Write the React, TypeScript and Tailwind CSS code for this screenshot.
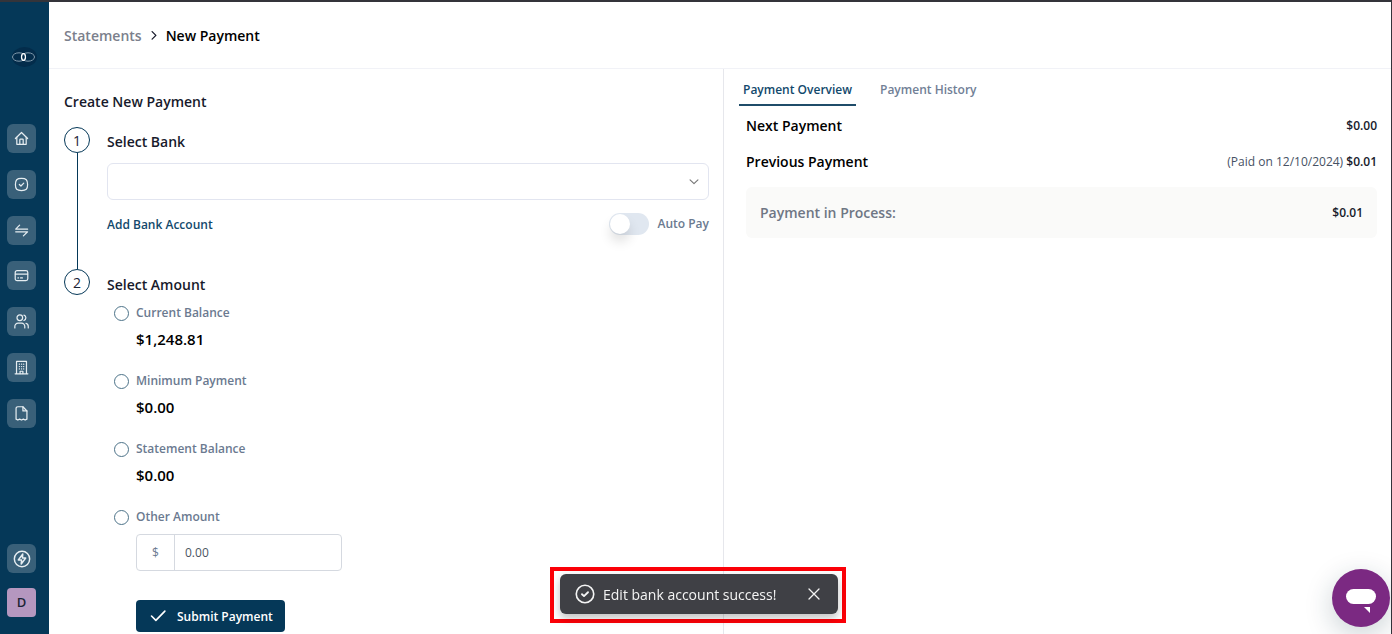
import React, { useState } from 'react';
import clsx from 'clsx';

type IconProps = { children: React.ReactNode; className?: string };

const Icon = ({ children, className = 'size-4' }: IconProps) => (
  <svg
    className={className}
    viewBox="0 0 16 16"
    fill="none"
    stroke="currentColor"
    strokeWidth="1.3"
    strokeLinecap="round"
    strokeLinejoin="round"
    aria-hidden="true"
  >
    {children}
  </svg>
);

const NAV_ITEMS = [
  {
    label: 'Home',
    icon: (
      <>
        <path d="M1.5 8 8 1.6 14.5 8" />
        <path d="M3 6.8v7.4h10V6.8M6.2 14V9.4a.8.8 0 0 1 .8-.8h2a.8.8 0 0 1 .8.8V14" />
      </>
    ),
  },
  {
    label: 'Tasks',
    icon: (
      <>
        <path d="M8 1.5c5 0 6.5 1.5 6.5 6.5S13 14.5 8 14.5 1.5 13 1.5 8 3 1.5 8 1.5z" />
        <path d="m5.7 8 1.7 1.6 3-3.1" />
      </>
    ),
  },
  { label: 'Transfers', icon: <path d="M6 2.3 1.8 6.6h12.7M1.8 9.4h12.7L10 13.7" /> },
  {
    label: 'Cards',
    icon: (
      <>
        <rect x="1.3" y="2.7" width="13.4" height="10.8" rx="2" />
        <path d="M1.5 6.6h13M4.2 10.6h.6M7 10.6h2" />
      </>
    ),
  },
  {
    label: 'Users',
    icon: (
      <>
        <circle cx="6.2" cy="4" r="3" />
        <path d="M10.6 1.2a3 3 0 0 1 0 5.7M.9 14.9v-1.7a3.4 3.4 0 0 1 3.4-3.4h3.8a3.4 3.4 0 0 1 3.4 3.4v1.7M12.7 9.9a3.4 3.4 0 0 1 2.5 3.3v1.7" />
      </>
    ),
  },
  {
    label: 'Company',
    icon: (
      <>
        <path d="M1.2 14.7h13.6M2.7 14.5V1.5h10.6v13" />
        <path d="M5.7 4.5h.2M8 4.5h.2M10.2 4.5h.2M5.7 7h.2M8 7h.2M10.2 7h.2M5.7 9.5h.2M8 9.5h.2M10.2 9.5h.2M6.5 14.5V12h3v2.5" />
      </>
    ),
  },
  {
    label: 'Statements',
    icon: (
      <>
        <path d="M2.2 14V2.6A1.8 1.8 0 0 1 4 .8h5.5l4.3 4.5V14l-1.900 1-1.900-1-2 1-2-1-1.900 1z" />
        <path d="M9.5 1v4.300h4.200" />
      </>
    ),
  },
];

const AMOUNT_OPTIONS = [
  { id: 'current', label: 'Current Balance', amount: '$1,248.81' },
  { id: 'minimum', label: 'Minimum Payment', amount: '$0.00' },
  { id: 'statement', label: 'Statement Balance', amount: '$0.00' },
  { id: 'other', label: 'Other Amount' },
];

function Sidebar() {
  const tile = 'flex size-[29px] items-center justify-center rounded-md bg-[#396079] text-[#e6edf1]';

  return (
    <aside className="flex w-[49px] shrink-0 flex-col bg-[#053858] pb-[17px] pl-[7px]">
      <a href="#home" aria-label="Dashboard" className="mt-11 ml-1 block">
        <svg className="h-[22px] w-[26px]" viewBox="0 0 26 22" fill="none" aria-hidden="true">
          <ellipse cx="13.5" cy="11" rx="12.5" ry="10" fill="#032c4b" />
          <ellipse cx="8" cy="11" rx="6.5" ry="4.2" stroke="#8fa6b7" strokeWidth="0.9" />
          <ellipse cx="17" cy="11" rx="6.5" ry="4.2" stroke="#8fa6b7" strokeWidth="0.9" />
          <ellipse cx="12.5" cy="11" rx="2" ry="3.5" stroke="#fff" strokeWidth="1.2" />
        </svg>
      </a>
      <nav className="mt-14 flex h-[304px] flex-col justify-between">
        {NAV_ITEMS.map((item) => (
          <a key={item.label} href={`#${item.label.toLowerCase()}`} aria-label={item.label} className={tile}>
            <Icon className="size-[15px]">{item.icon}</Icon>
          </a>
        ))}
      </nav>
      <div className="mt-auto flex flex-col gap-[15px]">
        <button type="button" aria-label="Quick actions" className={tile}>
          <Icon className="size-[18px]">
            <circle cx="8" cy="8" r="6.8" />
            <path d="M8.7 3.6 4.7 8.9h2.9l-.3 3.5 4-5.3H8.4z" />
          </Icon>
        </button>
        <button
          type="button"
          className="flex size-[29px] items-center justify-center rounded-sm bg-[#b597bf] text-[13px] font-semibold text-[#1c2536]"
        >
          D
        </button>
      </div>
    </aside>
  );
}

function StepMarker({ step, last }: { step: number; last?: boolean }) {
  return (
    <div className="flex w-[26px] shrink-0 flex-col items-center">
      <span className="flex size-[26px] items-center justify-center rounded-full border border-[#053858] pt-px text-sm text-[#1c2536]">
        {step}
      </span>
      {!last && <span className="w-px flex-1 bg-[#053858]" />}
    </div>
  );
}

function PaymentForm() {
  const [option, setOption] = useState('');
  const [amount, setAmount] = useState('0.00');
  const [autoPay, setAutoPay] = useState(false);

  return (
    <form className="pt-[23px] pr-[14px] pl-[15px]" onSubmit={(e) => e.preventDefault()}>
      <h1 className="text-sm leading-5 font-semibold">Create New Payment</h1>

      <div className="mt-[15px] flex gap-[17px]">
        <StepMarker step={1} />
        <div className="flex-1 pt-[5px] pb-[33px]">
          <label htmlFor="bank" className="block text-sm leading-5 font-semibold">
            Select Bank
          </label>
          <div className="relative mt-[11px]">
            <select id="bank" className="block h-[37px] w-full appearance-none rounded-md border border-[#e2e5f0] bg-white px-3 text-[13px]">
              <option value="" />
            </select>
            <Icon className="pointer-events-none absolute top-3 right-2 size-[14px] text-[#777]">
              <path d="m3.5 5.5 4.5 4.4 4.5-4.4" />
            </Icon>
          </div>
          <div className="mt-3 flex items-center justify-between">
            <a href="#add-bank" className="pt-0.5 text-xs leading-5 font-semibold text-[#12496c]">
              Add Bank Account
            </a>
            <label className="flex cursor-pointer items-center gap-2 text-xs leading-6 font-semibold text-[#6b7a90]">
              <input
                type="checkbox"
                role="switch"
                className="peer sr-only"
                checked={autoPay}
                onChange={(e) => setAutoPay(e.target.checked)}
              />
              <span className="flex h-[22px] w-10 items-center rounded-full bg-[#e0e7f0] px-px peer-checked:justify-end peer-checked:bg-[#053858]">
                <span className="size-5 rounded-full bg-white shadow-[0_8px_12px_rgba(0,0,0,0.12)]" />
              </span>
              Auto Pay
            </label>
          </div>
        </div>
      </div>

      <div className="flex gap-[17px]">
        <StepMarker step={2} last />
        <fieldset className="flex-1">
          <legend className="pt-[6px] text-sm leading-5 font-semibold">Select Amount</legend>
          <div className="mt-[7px] flex flex-col gap-[19px] pl-[7px]">
            {AMOUNT_OPTIONS.map((item) => (
              <div key={item.id}>
                <label className="flex items-center gap-[7px] text-xs leading-[22px] font-semibold text-[#6b7a90]">
                  <input
                    type="radio"
                    name="amount"
                    value={item.id}
                    checked={option === item.id}
                    onChange={() => setOption(item.id)}
                    className="size-[15px] appearance-none rounded-full border border-[#4d7389] bg-white checked:border-4 checked:border-[#053858]"
                  />
                  {item.label}
                </label>
                {item.amount && (
                  <p className="mt-[3px] pl-[22px] text-[15px] leading-6 font-semibold text-black">{item.amount}</p>
                )}
              </div>
            ))}
          </div>
          <div className="mt-[6px] ml-[29px] flex h-[37px] w-[206px] overflow-hidden rounded-[4px] border border-[#d5d9e0] text-xs">
            <span className="flex w-[38px] items-center justify-center border-r border-[#d5d9e0] text-[#6b7a90]">$</span>
            <input
              aria-label="Other amount"
              value={amount}
              onChange={(e) => setAmount(e.target.value)}
              className="min-w-0 flex-1 px-[10px] text-[#4b5462] outline-none"
            />
          </div>
          <button
            type="submit"
            className="mt-[29px] ml-[29px] flex h-8 w-[149px] items-center gap-[9px] rounded-[4px] bg-[#053858] pt-0.5 pl-3 text-xs font-semibold text-white"
          >
            <Icon className="size-5">
              <path d="m2.8 7.200 3.500 3.500 7.200-7.400" />
            </Icon>
            Submit Payment
          </button>
        </fieldset>
      </div>
    </form>
  );
}

const TABS = ['Payment Overview', 'Payment History'];

function PaymentSummary() {
  const [tab, setTab] = useState(TABS[0]);

  return (
    <section className="border-l border-[#e6e7ec] pr-[14px] pl-[15px]">
      <div role="tablist" className="flex gap-5">
        {TABS.map((name) => (
          <button
            key={name}
            type="button"
            role="tab"
            aria-selected={tab === name}
            onClick={() => setTab(name)}
            className={clsx(
              'h-[37px] border-b-2 px-1 pt-[6px] text-xs font-semibold',
              tab === name ? 'border-[#1f4c69] text-[#12496c]' : 'border-transparent text-[#718096]'
            )}
          >
            {name}
          </button>
        ))}
      </div>
      <div className="mt-[10px] pl-[7px] text-xs leading-5">
        <div className="flex items-center justify-between">
          <h2 className="text-sm leading-5 font-semibold text-black">Next Payment</h2>
          <span className="font-semibold">$0.00</span>
        </div>
        <div className="mt-4 flex items-center justify-between">
          <h2 className="text-sm leading-5 font-semibold text-black">Previous Payment</h2>
          <span className="text-[#465164]">
            (Paid on 12/10/2024) <b className="font-semibold text-[#171a2b]">$0.01</b>
          </span>
        </div>
        <div className="mt-[15px] flex h-[51px] items-center justify-between rounded-md bg-[#fafaf9] px-[14px]">
          <span className="text-sm font-semibold text-[#6f7684]">Payment in Process:</span>
          <span className="font-semibold">$0.01</span>
        </div>
      </div>
    </section>
  );
}

function Toast() {
  const [open, setOpen] = useState(true);
  if (!open) return null;

  return (
    <div className="pointer-events-none fixed inset-x-0 bottom-[11px] flex justify-center pl-1">
      <div className="pointer-events-auto w-[296px] border-4 border-[#fb0007] pt-[3px] pr-1 pb-[5px] pl-[6px]">
        <div
          role="status"
          className="flex h-10 items-center rounded-md bg-[#3f4045] pr-4 pl-[15px] text-sm text-[#f4f4f4] shadow-[0_4px_8px_rgba(0,0,0,0.25)]"
        >
          <Icon className="size-5">
            <circle cx="8" cy="8" r="7" />
            <path d="m5.6 8.2 1.6 1.5 3.2-3.1" strokeWidth="1.5" />
          </Icon>
          <span className="ml-2 flex-1 pt-0.5 whitespace-nowrap">Edit bank account success!</span>
          <button type="button" aria-label="Close" onClick={() => setOpen(false)}>
            <Icon>
              <path d="m3 3 10 10M13 3 3 13" />
            </Icon>
          </button>
        </div>
      </div>
    </div>
  );
}

export default function App() {
  return (
    <div className="flex min-h-screen border-t-2 border-r border-[#34343a] bg-white font-['Open_Sans',sans-serif] text-[#171a2b]">
      <Sidebar />
      <main className="flex min-w-0 flex-1 flex-col">
        <nav
          aria-label="Breadcrumb"
          className="flex h-[67px] items-center gap-[7px] border-b border-[#f1f2f7] pt-0.5 pl-[15px] text-sm font-semibold"
        >
          <a href="#statements" className="text-[#7b808c]">
            Statements
          </a>
          <Icon className="size-[10px]">
            <path d="m5 1 6 6-6 6" strokeWidth="2" />
          </Icon>
          <span className="text-black">New Payment</span>
        </nav>
        <div className="grid flex-1 grid-cols-[674fr_668fr]">
          <PaymentForm />
          <PaymentSummary />
        </div>
      </main>
      <Toast />
      <button
        type="button"
        aria-label="Open chat"
        className="fixed right-[2px] bottom-[7px] flex size-[58px] items-center justify-center rounded-full bg-[#7b2982] shadow-[0_8px_28px_rgba(16,48,64,0.22)]"
      >
        <svg className="h-6 w-[30px] overflow-visible" viewBox="0 0 30 24" fill="#fff" aria-hidden="true">
          <rect width="30" height="15" rx="7.5" y="3" />
          <path d="M18 21h6v6z" />
        </svg>
      </button>
    </div>
  );
}
